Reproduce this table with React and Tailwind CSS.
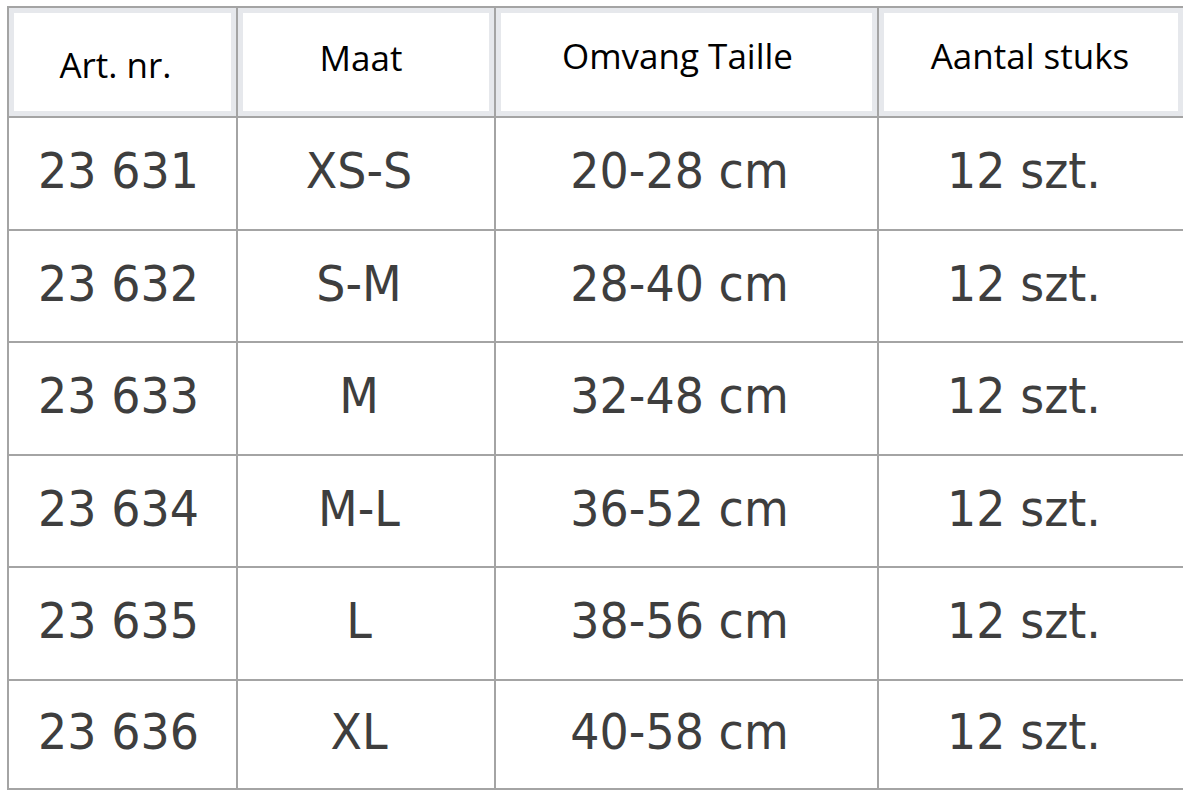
import React from "react";

const rows = [
  ["23 631", "XS-S", "20-28 cm", "12 szt."],
  ["23 632", "S-M", "28-40 cm", "12 szt."],
  ["23 633", "M", "32-48 cm", "12 szt."],
  ["23 634", "M-L", "36-52 cm", "12 szt."],
  ["23 635", "L", "38-56 cm", "12 szt."],
  ["23 636", "XL", "40-58 cm", "12 szt."],
];

const headers = [
  { t: "Art. nr.", cls: "pt-[18px] pr-[14px]" },
  { t: "Maat", cls: "pt-[4px] pr-[10px]" },
  { t: "Omvang Taille", cls: "pt-0 pr-[18px]" },
  { t: "Aantal stuks", cls: "pt-0 pr-[2px]" },
];

const bodyPad = ["pr-[8px]", "pr-[14px]", "pr-[14px]", "pr-[14px]"];

export default function App() {
  return (
    <div className="w-[1200px] h-[798px] bg-white pl-[7px] pt-[6px]">
      <div className="w-[1176px] h-[784px] bg-[#a4a4a4] p-[2px] grid gap-[2px] grid-cols-[227px_256px_381px_304px] grid-rows-[108px_111px_110px_111px_110px_111px_107px]">
        {headers.map((h, i) => (
          <div key={i} className="bg-[#e6e8ec] p-[5px]">
            <div
              className={`h-full bg-white flex items-center justify-center text-[35px] text-black ${h.cls}`}
              style={{ fontFamily: '"Open Sans", "Noto Sans", sans-serif' }}
            >
              <span className="-mt-[12px]">{h.t}</span>
            </div>
          </div>
        ))}
        {rows.map((r, ri) =>
          r.map((c, ci) => (
            <div
              key={ri + "-" + ci}
              className={`bg-white flex items-center justify-center ${bodyPad[ci]} text-[46px] text-[#3e3e3e]`}
              style={{ fontFamily: '"DejaVu Sans", Verdana, sans-serif' }}
            >
              <span className="inline-block scale-y-[1.08] -mt-[4px]">{c}</span>
            </div>
          ))
        )}
      </div>
    </div>
  );
}
